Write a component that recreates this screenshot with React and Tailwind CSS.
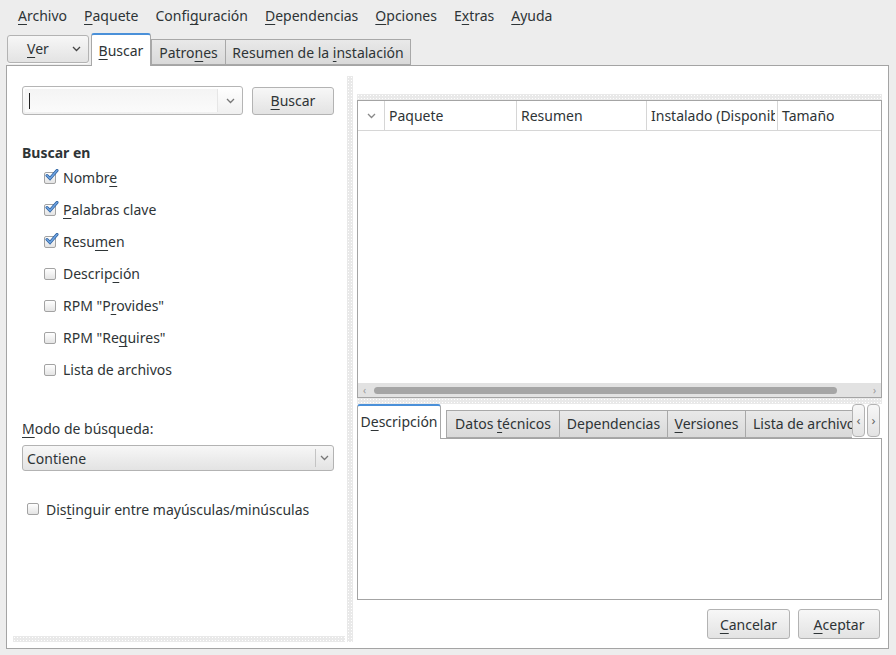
import React from 'react';

const dots =
  'bg-[#e9e9e9] bg-[radial-gradient(circle,#ffffff_0.8px,transparent_1px)] bg-[length:3px_3px]';

function U({ children }) {
  return <span className="underline underline-offset-[3px] decoration-1">{children}</span>;
}

function Chevron({ className = '' }) {
  return (
    <svg width="9" height="6" viewBox="0 0 9 6" className={className}>
      <polyline points="1,1 4.5,4.5 8,1" fill="none" stroke="currentColor" strokeWidth="1.3" />
    </svg>
  );
}

function Check({ checked }) {
  return (
    <span className="relative inline-block w-[12px] h-[12px] shrink-0">
      <span className="absolute inset-0 rounded-[2px] border border-[#a3a3a3] bg-gradient-to-b from-[#ffffff] to-[#e4e4e4]" />
      {checked && (
        <svg width="14" height="12" viewBox="0 0 14 12" className="absolute -top-[3px] left-[1px]">
          <path d="M2 6.5 L5 9.5 L12 1.5" fill="none" stroke="#2a5f9e" strokeWidth="3" strokeLinecap="round" />
          <path d="M2 6.5 L5 9.5 L12 1.5" fill="none" stroke="#6fa3e0" strokeWidth="1.6" strokeLinecap="round" />
        </svg>
      )}
    </span>
  );
}

function Btn({ children, className = '' }) {
  return (
    <div
      className={
        'flex items-center rounded-[3px] border border-[#b3b3b3] bg-gradient-to-b from-[#f7f7f7] to-[#e3e3e3] shadow-[0_1px_0_rgba(255,255,255,0.8)] ' +
        className
      }
    >
      {children}
    </div>
  );
}

const tabOff = 'border-[#a8a8a8] bg-gradient-to-b from-[#e9e9e9] to-[#d9d9d9] flex items-center';

const opts = [
  ['Nombr', 'e', ''],
  ['', 'P', 'alabras clave'],
  ['Resu', 'm', 'en'],
  ['Descrip', 'c', 'ión', false],
  ['RPM "P', 'r', 'ovides"', false],
  ['RPM "Re', 'q', 'uires"', false],
  ['Lista de archivos', '', '', false],
];

export default function App() {
  return (
    <div
      className="w-[896px] h-[655px] bg-[#ededed] text-[#2e3436] text-[14px] flex flex-col overflow-hidden"
      style={{ fontFamily: '"Noto Sans", "Open Sans", sans-serif' }}
    >
      {/* menu bar */}
      <div className="h-[31px] flex items-center pl-[18px] gap-[17px] shrink-0">
        <span><U>A</U>rchivo</span>
        <span><U>P</U>aquete</span>
        <span>Confi<U>g</U>uración</span>
        <span><U>D</U>ependencias</span>
        <span><U>O</U>pciones</span>
        <span>E<U>x</U>tras</span>
        <span><U>A</U>yuda</span>
      </div>

      {/* tab row */}
      <div className="h-[34px] flex items-end pl-[7px] shrink-0 relative z-10">
        <Btn className="w-[82px] h-[28px] mb-[2px] justify-between pl-[19px] pr-[7px] pb-[1px]">
          <span><U>V</U>er</span>
          <Chevron className="text-[#444]" />
        </Btn>
        <div className="ml-[2px] w-[60px] h-[33px] bg-white border border-[#a8a8a8] border-b-0 border-t-2 border-t-[#4a90d9] rounded-t-[3px] flex items-center justify-center -mb-[1px] pb-[1px]">
          <span><U>B</U>uscar</span>
        </div>
        <div className={'w-[75px] h-[26px] border justify-center ' + tabOff}>
          <span>Patro<U>n</U>es</span>
        </div>
        <div className={'w-[185px] h-[26px] border border-l-0 justify-center ' + tabOff}>
          <span>Resumen de la <U>i</U>nstalación</span>
        </div>
      </div>

      {/* notebook pane */}
      <div className="ml-[6px] w-[883px] h-[584px] border border-[#a4a4a4] bg-white flex shrink-0">
        {/* left side */}
        <div className="w-[340px] shrink-0 flex flex-col">
          <div className="flex-1 pl-[15px] pr-[12px] pt-[20px] flex flex-col">
            <div className="flex items-center gap-[9px]">
              <div className="w-[221px] h-[29px] flex rounded-[3px] border border-[#b5b5b5] bg-gradient-to-b from-[#ffffff] to-[#f0f0f0]">
                <div className="flex-1 flex items-center pl-[4px] border-r border-[#e6e6e6] bg-gradient-to-b from-[#f4f4f4] to-[#fbfbfb] m-[2px] mr-0">
                  <span className="w-px h-[16px] bg-[#222]" />
                </div>
                <div className="w-[24px] flex items-center justify-center text-[#777]">
                  <Chevron />
                </div>
              </div>
              <Btn className="w-[82px] h-[28px] justify-center">
                <span><U>B</U>uscar</span>
              </Btn>
            </div>

            <div className="mt-[27px] font-bold h-[20px] flex items-center">Buscar en</div>
            <div className="flex flex-col pl-[22px]">
              {opts.map(([a, b, c, chk]) => (
                <div key={a + b + c} className="h-[32px] flex items-center gap-[7px] pb-[1px]">
                  <Check checked={chk !== false} />
                  <span>
                    {a}
                    {b && <U>{b}</U>}
                    {c}
                  </span>
                </div>
              ))}
            </div>

            <div className="mt-[32px] h-[20px] flex items-center">
              <span><U>M</U>odo de búsqueda:</span>
            </div>
            <Btn className="mt-[7px] w-[312px] h-[26px] justify-between pl-[4px]">
              <span>Contiene</span>
              <span className="h-[18px] flex items-center border-l border-[#c4c4c4] w-[18px] justify-center text-[#777]">
                <Chevron />
              </span>
            </Btn>
            <div className="mt-[28px] pl-[5px] flex items-center gap-[7px] h-[20px]">
              <Check checked={false} />
              <span>Dis<U>t</U>inguir entre mayúsculas/minúsculas</span>
            </div>
          </div>
          <div className={'h-[6px] ml-[6px] mr-[2px] mb-[6px] ' + dots} />
        </div>

        {/* paned handle */}
        <div className={'w-[6px] shrink-0 mt-[10px] mb-[6px] ' + dots} />

        {/* right side */}
        <div className="flex-1 min-w-0 flex flex-col pl-[4px] pr-[6px] pt-[28px]">
          <div className={'h-[6px] ' + dots} />
          <div className="h-[298px] border border-[#a4a4a4] flex flex-col">
            <div className="h-[30px] flex border-b border-[#d6d6d6] shrink-0">
              <div className="w-[27px] flex items-center justify-center border-r border-[#d6d6d6] text-[#888]">
                <Chevron />
              </div>
              <div className="w-[132px] flex items-center pl-[4px] border-r border-[#d6d6d6]">Paquete</div>
              <div className="w-[130px] flex items-center pl-[4px] border-r border-[#d6d6d6]">Resumen</div>
              <div className="w-[131px] flex items-center pl-[4px] border-r border-[#d6d6d6] overflow-hidden whitespace-nowrap">
                <span className="w-[124px] overflow-hidden">Instalado (Disponible)</span>
              </div>
              <div className="flex-1 flex items-center pl-[4px]">Tamaño</div>
            </div>
            <div className="flex-1" />
            <div className="h-[14px] bg-[#e2e2e2] flex items-center px-[5px] gap-[8px] text-[#999] text-[10px] leading-none">
              <span>‹</span>
              <div className="flex-1 h-[7px] rounded-full bg-[#a5a5a5] mr-[28px]" />
              <span>›</span>
            </div>
          </div>
          <div className={'h-[6px] ' + dots} />

          {/* bottom notebook tabs */}
          <div className="h-[34px] flex items-end relative z-10 shrink-0">
            <div className="w-[84px] h-[35px] bg-white border border-[#a8a8a8] border-b-0 border-t-2 border-t-[#4a90d9] rounded-t-[3px] flex items-center justify-center -mb-px pb-[2px]">
              <span>D<U>e</U>scripción</span>
            </div>
            <div className="flex items-end overflow-hidden w-[406px] ml-[5px]">
              <div className={'shrink-0 w-[114px] h-[28px] border justify-center pb-[2px] ' + tabOff}>
                <span>Datos <U>t</U>écnicos</span>
              </div>
              <div className={'shrink-0 w-[108px] h-[28px] border border-l-0 justify-center pb-[2px] ' + tabOff}>
                <span>Dependencias</span>
              </div>
              <div className={'shrink-0 w-[78px] h-[28px] border border-l-0 justify-center pb-[2px] ' + tabOff}>
                <span><U>V</U>ersiones</span>
              </div>
              <div className={'shrink-0 w-[130px] h-[28px] border border-l-0 pl-[7px] pb-[2px] whitespace-nowrap ' + tabOff}>
                <span>Lista de archivos</span>
              </div>
            </div>
            <div className="flex gap-[2px] self-start h-[33px]">
              <Btn className="w-[13px] h-[33px] justify-center !rounded-[4px] text-[#666] text-[13px]">‹</Btn>
              <Btn className="w-[13px] h-[33px] justify-center !rounded-[4px] text-[#666] text-[13px]">›</Btn>
            </div>
          </div>
          <div className="h-[162px] border border-[#a4a4a4] bg-white" />

          <div className="flex justify-end gap-[8px] mt-[9px] pr-[2px]">
            <Btn className="w-[83px] h-[30px] justify-center">
              <span><U>C</U>ancelar</span>
            </Btn>
            <Btn className="w-[82px] h-[30px] justify-center">
              <span><U>A</U>ceptar</span>
            </Btn>
          </div>
        </div>
      </div>
    </div>
  );
}
